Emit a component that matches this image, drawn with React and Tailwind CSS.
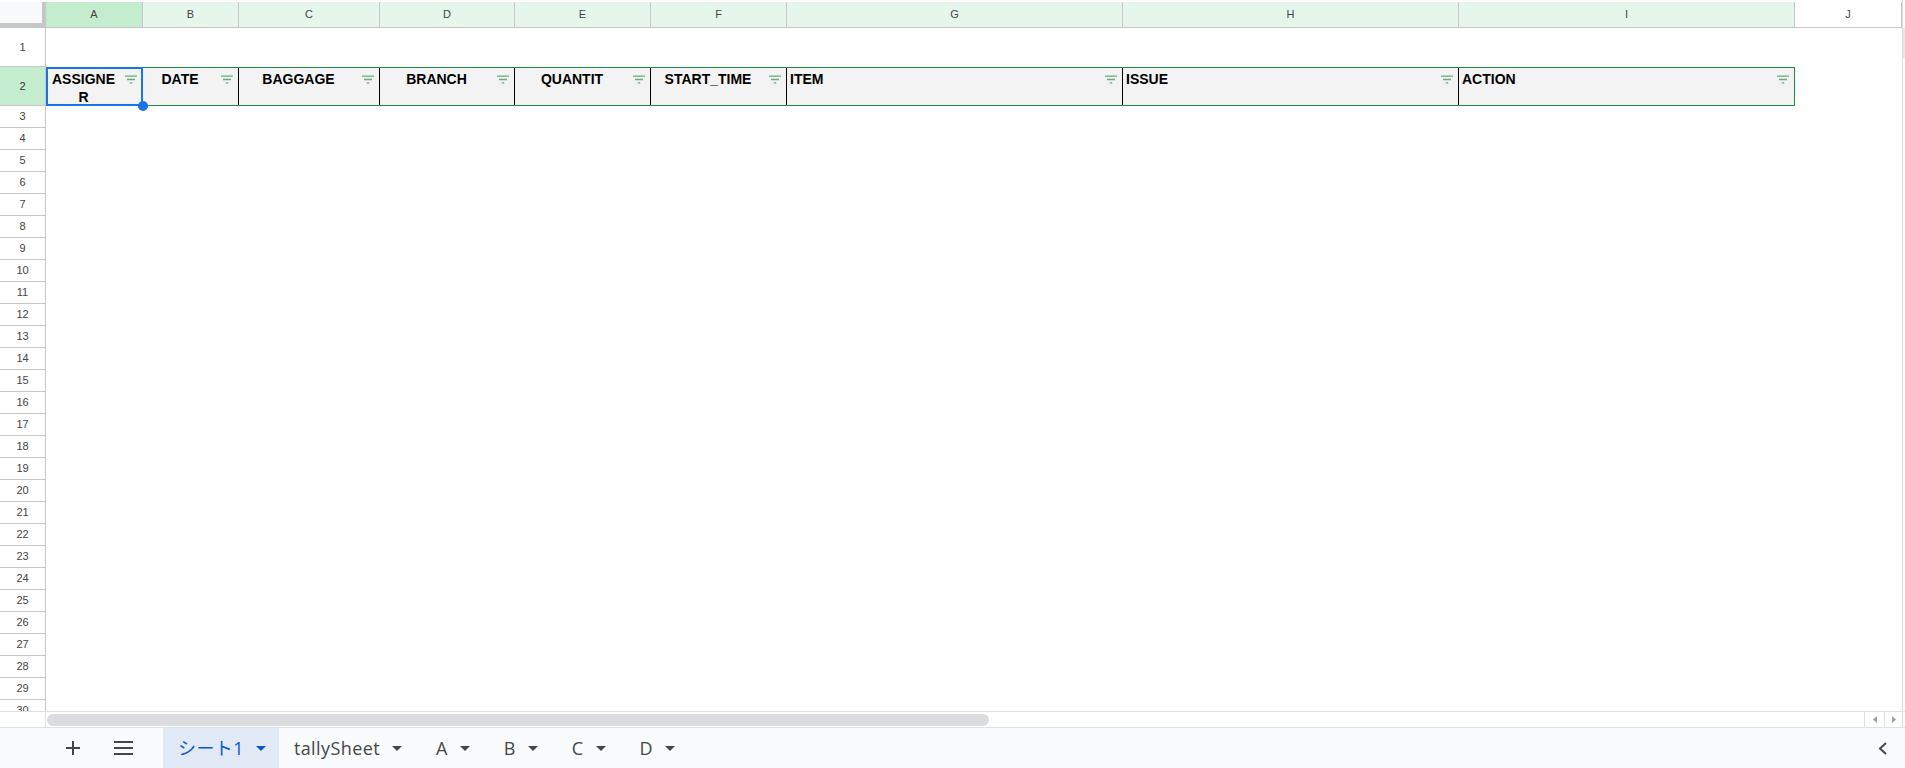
import { Fragment } from 'react'

const cols = [
  { l: 'A', w: 'w-[97px]', bg: 'bg-[#c4edd0]' },
  { l: 'B', w: 'w-[96px]', bg: 'bg-[#e6f6eb]' },
  { l: 'C', w: 'w-[141px]', bg: 'bg-[#e6f6eb]' },
  { l: 'D', w: 'w-[135px]', bg: 'bg-[#e6f6eb]' },
  { l: 'E', w: 'w-[136px]', bg: 'bg-[#e6f6eb]' },
  { l: 'F', w: 'w-[136px]', bg: 'bg-[#e6f6eb]' },
  { l: 'G', w: 'w-[336px]', bg: 'bg-[#e6f6eb]' },
  { l: 'H', w: 'w-[336px]', bg: 'bg-[#e6f6eb]' },
  { l: 'I', w: 'w-[336px]', bg: 'bg-[#e6f6eb]' },
  { l: 'J', w: 'w-[107px]', bg: 'bg-white' },
]

const heads = [
  { t: 'ASSIGNE', t2: 'R', w: 'w-[97px]', center: true, sel: true },
  { t: 'DATE', w: 'w-[96px]', center: true },
  { t: 'BAGGAGE', w: 'w-[141px]', center: true },
  { t: 'BRANCH', w: 'w-[135px]', center: true },
  { t: 'QUANTIT', w: 'w-[136px]', center: true },
  { t: 'START_TIME', w: 'w-[136px]', center: true },
  { t: 'ITEM', w: 'w-[336px]' },
  { t: 'ISSUE', w: 'w-[336px]' },
  { t: 'ACTION', w: 'w-[336px]', end: true },
]

const tabs = ['シート1', 'tallySheet', 'A', 'B', 'C', 'D']

function FilterIcon() {
  return (
    <svg width="12" height="9" viewBox="3 6 18 12" className="shrink-0 mt-[7px] mr-[5px] ml-[4px]">
      <path d="M10 18h4v-2h-4v2zM3 6v2h18V6H3zm3 7h12v-2H6v2z" fill="#63ad78" />
    </svg>
  )
}

function Caret({ blue }) {
  return (
    <svg width="10" height="5" viewBox="0 0 10 5" className="shrink-0">
      <path d="M0 0h10L5 5z" fill={blue ? '#0b57d0' : '#444746'} />
    </svg>
  )
}

export default function App() {
  const rows = []
  for (let i = 3; i <= 30; i++) rows.push(i)

  return (
    <div className="w-[1905px] h-[768px] flex flex-col bg-white overflow-hidden font-['Liberation_Sans',Arial,sans-serif]">
      {/* grid */}
      <div className="flex-1 min-h-0 flex overflow-hidden">
        <div className="flex-1 min-w-0 flex flex-col">
          <div className="h-[2px] shrink-0" />

          {/* column letters */}
          <div className="h-[26px] shrink-0 flex border-b border-[#c7c7c7]">
            <div className="w-[46px] shrink-0 bg-[#f8f9fa] border-r-4 border-b-4 border-[#c4c7c5]" />
            {cols.map((c) => (
              <div
                key={c.l}
                className={`${c.w} ${c.bg} shrink-0 border-r border-[#c7c7c7] flex items-center justify-center text-[11px] text-[#444]`}
              >
                {c.l}
              </div>
            ))}
          </div>

          {/* row 1 */}
          <div className="h-[39px] shrink-0 flex">
            <div className="w-[46px] shrink-0 border-r border-b border-[#c7c7c7] flex items-center justify-center text-[11px] text-[#444]">
              1
            </div>
          </div>

          {/* row 2: header row */}
          <div className="h-[39px] shrink-0 flex">
            <div className="w-[46px] shrink-0 bg-[#c4edd0] border-r border-b border-[#c7c7c7] flex items-center justify-center text-[11px] text-[#333]">
              2
            </div>
            <div className="flex border-y border-[#1e8e3e] h-[39px]">
              {heads.map((h) => (
                <div
                  key={h.t}
                  className={`${h.w} relative shrink-0 bg-[#f3f3f3] flex ${h.end ? 'border-r border-[#1e8e3e]' : 'border-r border-black'}`}
                >
                  <div
                    className={`flex-1 min-w-0 pt-[2px] text-[14px] leading-[18px] font-bold text-black ${h.center ? 'text-center' : 'text-left pl-[3px]'}`}
                  >
                    {h.t}
                    {h.t2 && (
                      <>
                        <br />
                        {h.t2}
                      </>
                    )}
                  </div>
                  <FilterIcon />
                  {h.sel && (
                    <>
                      <div className="absolute top-[-1px] bottom-[-1px] left-0 right-[-1px] border-2 border-[#1a73e8] pointer-events-none" />
                      <div className="absolute right-[-6px] bottom-[-6px] w-[10px] h-[10px] rounded-full bg-[#1a73e8] z-10" />
                    </>
                  )}
                </div>
              ))}
            </div>
          </div>

          {/* rows 3..30 */}
          {rows.map((r) => (
            <div key={r} className="h-[22px] shrink-0 flex">
              <div className="w-[46px] shrink-0 border-r border-b border-[#c7c7c7] flex items-center justify-center text-[11px] text-[#444]">
                {r}
              </div>
            </div>
          ))}
        </div>

        {/* vertical scroll strip */}
        <div className="w-[3px] shrink-0 border-l border-[#dadce0] flex flex-col">
          <div className="h-[28px]" />
          <div className="h-[30px] bg-[#e8e8e8]" />
        </div>
      </div>

      {/* horizontal scrollbar */}
      <div className="h-[16px] shrink-0 flex border-t border-[#e0e0e0]">
        <div className="w-[46px] shrink-0 border-r border-[#e0e0e0]" />
        <div className="flex-1 min-w-0 flex items-center">
          <div className="ml-[1px] w-[942px] h-[12px] rounded-full bg-[#dadce0]" />
        </div>
        <div className="w-[20px] shrink-0 border-l border-[#e0e0e0] flex items-center justify-center">
          <svg width="4" height="7" viewBox="0 0 4 7">
            <path d="M4 0v7L0 3.5z" fill="#9aa0a6" />
          </svg>
        </div>
        <div className="w-[18px] shrink-0 border-l border-[#e0e0e0] flex items-center justify-center">
          <svg width="4" height="7" viewBox="0 0 4 7">
            <path d="M0 0v7l4-3.5z" fill="#9aa0a6" />
          </svg>
        </div>
        <div className="w-[3px] shrink-0 border-l border-[#dadce0]" />
      </div>

      {/* sheet tabs bar */}
      <div className="h-[41px] shrink-0 flex items-stretch bg-[#f9fbfd] border-t border-[#e0e0e0]">
        <div className="ml-[53px] w-[40px] flex items-center justify-center">
          <svg width="14" height="14" viewBox="0 0 14 14">
            <path d="M7 0v14M0 7h14" stroke="#444746" strokeWidth="2" />
          </svg>
        </div>
        <div className="ml-[10px] w-[40px] flex items-center justify-center">
          <svg width="19" height="14" viewBox="0 0 19 14">
            <path d="M0 1h19M0 7h19M0 13h19" stroke="#444746" strokeWidth="2" />
          </svg>
        </div>
        <div className="ml-[20px] flex items-stretch">
          {tabs.map((t, i) => (
            <div
              key={t}
              className={`flex items-center pl-[15px] ${i === 0 ? 'pr-[13px] bg-[#e1e9f7] text-[#0b57d0]' : 'pr-[19px] text-[#444746]'}`}
            >
              <span className="text-[18px] tracking-[0.4px] font-['Open_Sans','Noto_Sans_CJK_JP',sans-serif] leading-none">
                {t}
              </span>
              <span className="ml-[12px] flex items-center">
                <Caret blue={i === 0} />
              </span>
            </div>
          ))}
        </div>
        <div className="ml-auto mr-[3px] w-[40px] flex items-center justify-center">
          <svg width="9" height="13" viewBox="0 0 9 13">
            <path d="M8 1L2 6.5 8 12" fill="none" stroke="#444746" strokeWidth="2" />
          </svg>
        </div>
      </div>
    </div>
  )
}
